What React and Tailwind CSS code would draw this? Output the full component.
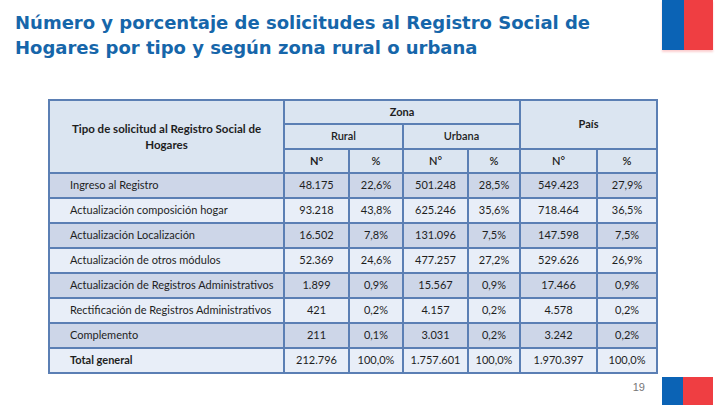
export default function App() {
  const rows = [
    ["Ingreso al Registro", "48.175", "22,6%", "501.248", "28,5%", "549.423", "27,9%"],
    ["Actualización composición hogar", "93.218", "43,8%", "625.246", "35,6%", "718.464", "36,5%"],
    ["Actualización Localización", "16.502", "7,8%", "131.096", "7,5%", "147.598", "7,5%"],
    ["Actualización de otros módulos", "52.369", "24,6%", "477.257", "27,2%", "529.626", "26,9%"],
    ["Actualización de Registros Administrativos", "1.899", "0,9%", "15.567", "0,9%", "17.466", "0,9%"],
    ["Rectificación de Registros Administrativos", "421", "0,2%", "4.157", "0,2%", "4.578", "0,2%"],
    ["Complemento", "211", "0,1%", "3.031", "0,2%", "3.242", "0,2%"],
    ["Total general", "212.796", "100,0%", "1.757.601", "100,0%", "1.970.397", "100,0%"],
  ];
  const th = "border-2 border-[#5b7fb4] bg-[#dbe5f1] font-bold text-center align-middle";
  return (
    <div className="w-[720px] h-[405px] bg-white flex flex-col overflow-hidden" style={{ fontFamily: "Lato, 'Open Sans', sans-serif" }}>
      <div className="flex justify-between items-start h-[50px]">
        <h1 className="pl-[15px] pt-[10px] text-[18px] leading-[25px] font-bold text-[#1666aa]" style={{ fontFamily: "'DejaVu Sans', Verdana, sans-serif" }}>
          Número y porcentaje de solicitudes al Registro Social de<br />Hogares por tipo y según zona rural o urbana
        </h1>
        <div className="flex mr-[7px] h-[50px] shrink-0 shadow-[0_2px_2px_rgba(239,62,66,0.25)]">
          <div className="w-[22px] bg-[#0b63b5]" />
          <div className="w-[29px] bg-[#ef3e42]" />
        </div>
      </div>
      <div className="pl-[48px] mt-[49px]">
        <table className="table-fixed border-collapse w-[608px] text-[11px] text-[#1e1e1e]">
          <colgroup>
            <col className="w-[235px]" />
            <col className="w-[65px]" />
            <col className="w-[54px]" />
            <col className="w-[65px]" />
            <col className="w-[52px]" />
            <col className="w-[77px]" />
            <col className="w-[60px]" />
          </colgroup>
          <thead>
            <tr className="h-[24px]">
              <th rowSpan={3} className={th + " px-[12px] leading-[16px] text-[11.5px]"}>Tipo de solicitud al Registro Social de Hogares</th>
              <th colSpan={4} className={th}>Zona</th>
              <th colSpan={2} rowSpan={2} className={th}>País</th>
            </tr>
            <tr className="h-[25px]">
              <th colSpan={2} className={th + " font-semibold"}>Rural</th>
              <th colSpan={2} className={th + " font-semibold"}>Urbana</th>
            </tr>
            <tr className="h-[24px]">
              <th className={th}>N°</th>
              <th className={th + " font-semibold"}>%</th>
              <th className={th + " font-semibold"}>N°</th>
              <th className={th + " font-semibold"}>%</th>
              <th className={th + " font-semibold"}>N°</th>
              <th className={th + " font-semibold"}>%</th>
            </tr>
          </thead>
          <tbody>
            {rows.map((r, i) => {
              const bg = i % 2 === 0 ? "bg-[#cdd6e8]" : "bg-[#e8eef8]";
              const bold = i === rows.length - 1 ? "font-bold" : "";
              return (
                <tr key={i} className="h-[25px]">
                  {r.map((c, j) => (
                    <td
                      key={j}
                      className={
                        "border-2 border-[#5b7fb4] whitespace-nowrap align-middle " +
                        bg + " " +
                        (j === 0 ? "text-left pl-[20px] " + bold : "text-center")
                      }
                    >
                      {c}
                    </td>
                  ))}
                </tr>
              );
            })}
          </tbody>
        </table>
      </div>
      <div className="flex-1 flex justify-end items-end">
        <span className="text-[11px] text-[#777] mr-[17px] mb-[10px]" style={{ fontFamily: "'Liberation Sans', sans-serif" }}>19</span>
        <div className="flex mr-[7px] h-[28px]">
          <div className="w-[21px] bg-[#0b63b5]" />
          <div className="w-[30px] bg-[#ef3e42]" />
        </div>
      </div>
    </div>
  );
}
